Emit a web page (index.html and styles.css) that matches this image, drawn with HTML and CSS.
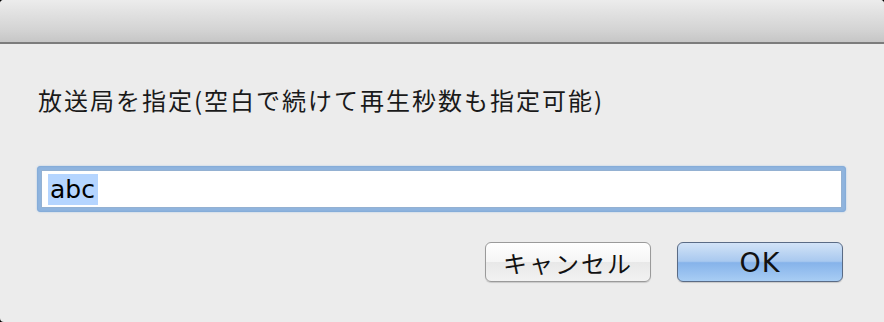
FILE: index.html
```html
<!DOCTYPE html>
<html>
<head>
    <meta charset="utf-8">
    <link rel="stylesheet" href="styles.css">
</head>
<body>
    <div class="window">
        <div class="titlebar"></div>

        <div class="content">
            <div class="prompt">放送局を指定(空白で続けて再生秒数も指定可能)</div>

            <div class="input-ring">
                <div class="input-box"><span class="selected">abc</span></div>
            </div>

            <div class="buttons">
                <button class="btn">キャンセル</button>
                <button class="btn btn-default">OK</button>
            </div>
        </div>
    </div>
</body>
</html>
```

FILE: styles.css
```css
body {
    margin: 0;
    width: 884px;
    height: 322px;
    background: #000;
    font-family: "Noto Sans CJK JP", "Liberation Sans", sans-serif;
    overflow: hidden;
}

.window {
    width: 884px;
    height: 322px;
    background: #ececec;
    border-radius: 4px 4px 0 4px;
    overflow: hidden;
}

.titlebar {
    height: 42px;
    background: linear-gradient(#ececec, #d4d4d4 70%, #c6c6c6);
    border-bottom: 2px solid #7c7c7c;
}

.content {
    padding: 40px 38px 0 37px;
}

.prompt {
    font-size: 24px;
    letter-spacing: 2px;
    line-height: 32px;
    color: #1a1a1a;
    padding-left: 1px;
}

.input-ring {
    margin-top: 50px;
    width: 809px;
    height: 46px;
    box-sizing: border-box;
    padding: 4px;
    border-radius: 4px;
    background: #8fb4de;
    box-shadow: 0 0 2px #a8c4e4, inset 0 0 2px #6f9bce;
}

.input-box {
    height: 38px;
    background: #fff;
    border: 1px solid #94b1d2;
    box-sizing: border-box;
    padding: 3px 0 0 6px;
}

.selected {
    display: inline-block;
    background: #b5d5ff;
    color: #000;
    font-family: "DejaVu Sans", "Liberation Sans", sans-serif;
    font-size: 25px;
    line-height: 31px;
    padding: 0 3px 0 2px;
}

.buttons {
    display: flex;
    justify-content: flex-end;
    gap: 26px;
    margin-top: 30px;
    padding-right: 3px;
}

.btn {
    width: 166px;
    height: 40px;
    border: 1px solid #9a9a9a;
    border-radius: 6px;
    background: linear-gradient(#fefefe, #f5f5f5 50%, #e8e8e8 51%, #f2f2f2);
    box-shadow: 0 1px 1px rgba(0, 0, 0, 0.15);
    font-family: "Noto Sans CJK JP", "Liberation Sans", sans-serif;
    font-size: 24px;
    letter-spacing: 2px;
    color: #111;
    padding: 0;
    cursor: pointer;
}

.btn-default {
    border-color: #5a6b85;
    background: linear-gradient(#d2e3f7, #a9c9ef 48%, #86b3ea 52%, #a8cdf4);
    font-family: "DejaVu Sans", "Liberation Sans", sans-serif;
    font-size: 27px;
    letter-spacing: 1px;
}
```
